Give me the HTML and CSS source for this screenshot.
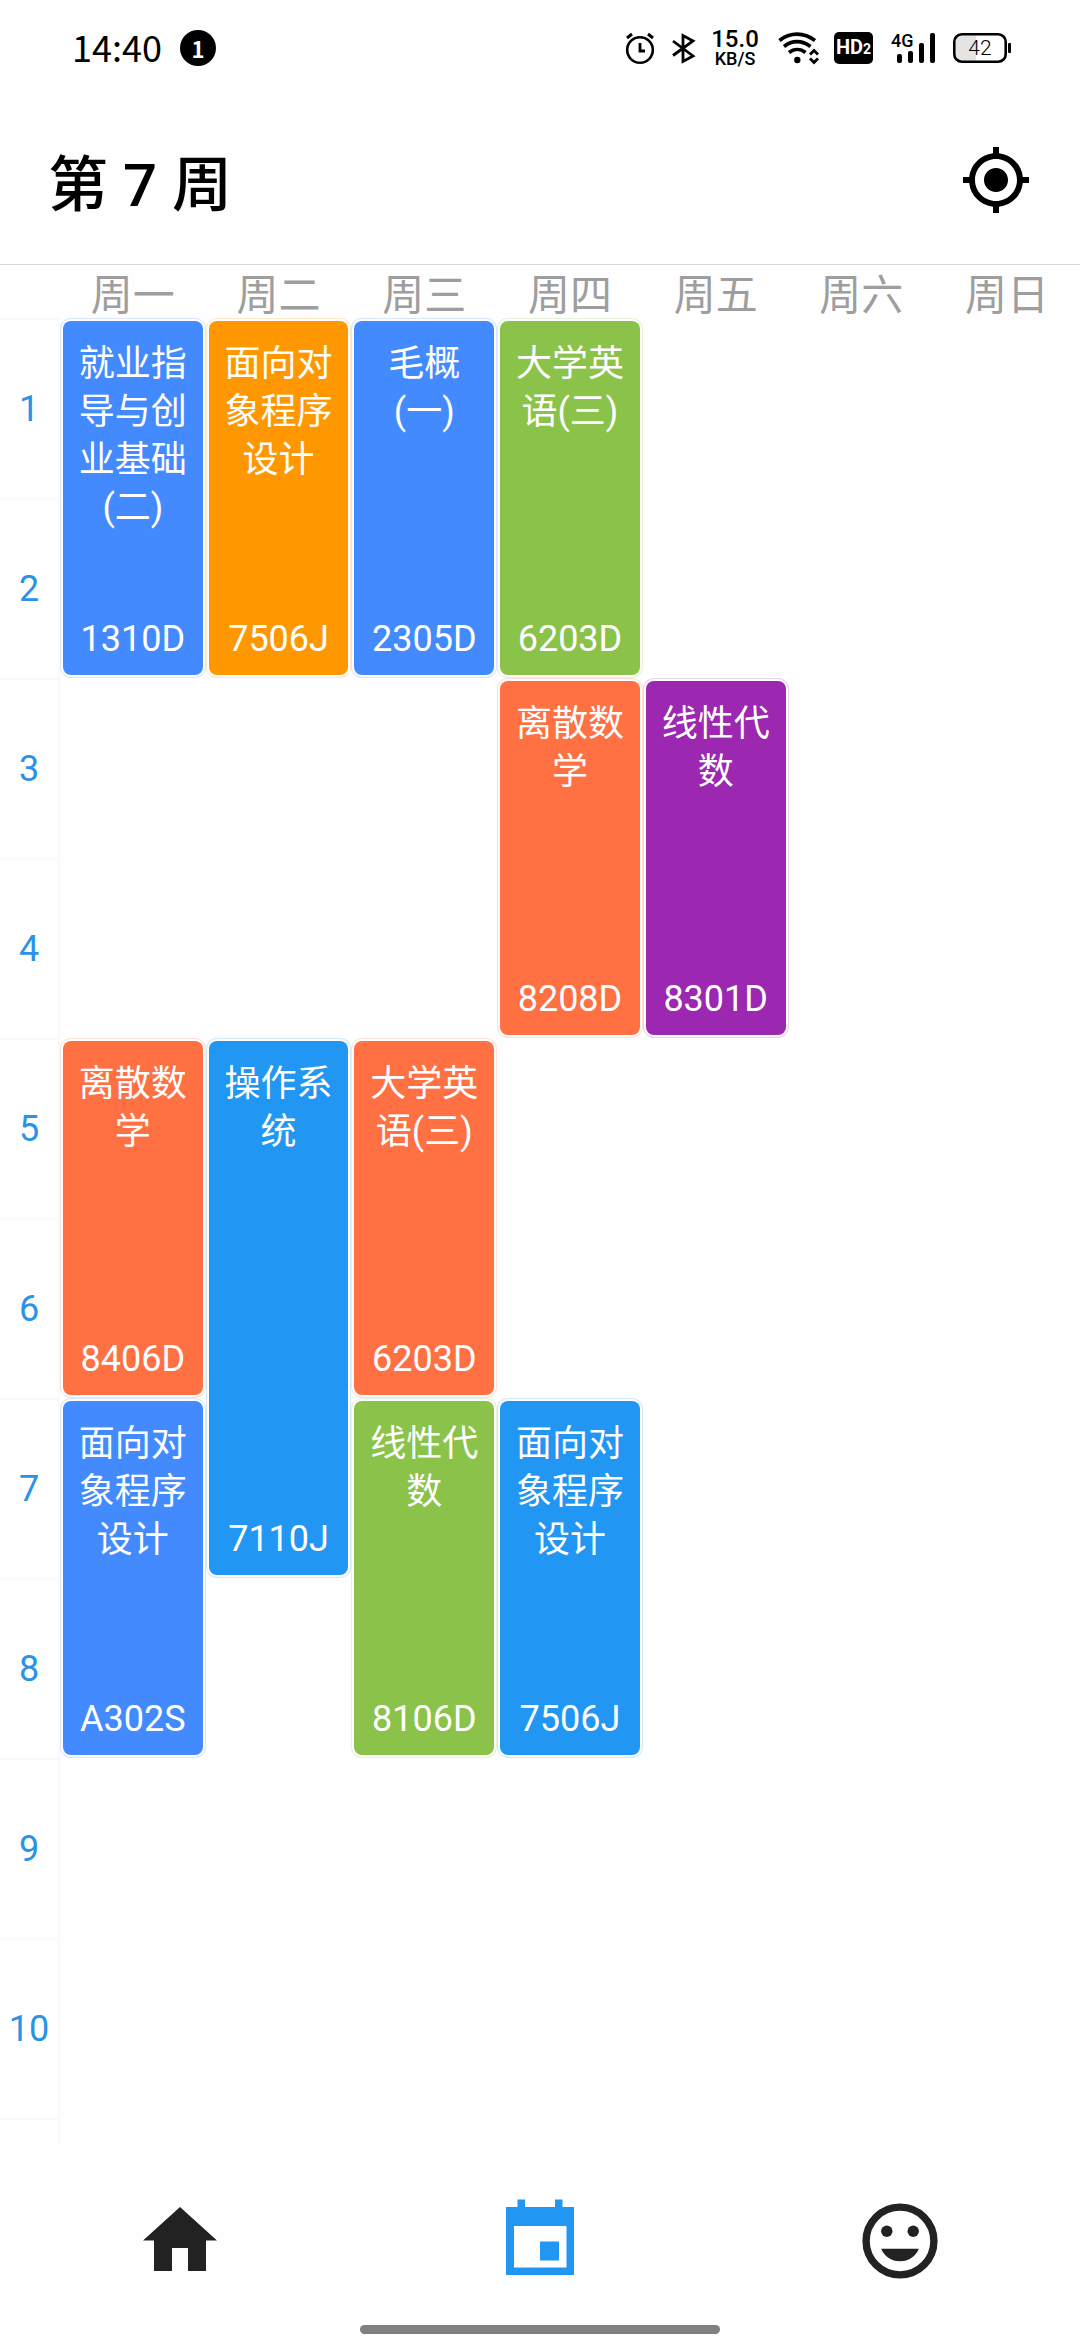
FILE: index.html
```html
<!DOCTYPE html>
<html lang="zh-CN">
<head>
<meta charset="utf-8">
<meta name="viewport" content="width=device-width, initial-scale=1">
<title>第 7 周</title>
<link rel="stylesheet" href="styles.css">
</head>
<body>
<div class="app">
  <div class="status-bar">
    <div class="status-left">
      <span class="clock">14:40</span>
      <span class="badge">1</span>
    </div>
    <div class="status-right">
      <svg width="28" height="32" viewBox="0 0 28 32" fill="none" stroke="#000">
        <circle cx="14" cy="18" r="12.8" stroke-width="2.6"/>
        <path d="M14 11v8h5" stroke-width="2.8"/>
        <path d="M1 6l5-4M27 6l-5-4" stroke-width="3"/>
      </svg>
      <svg width="22" height="32" viewBox="0 0 22 32" fill="none" stroke="#000" stroke-width="2.8">
        <path d="M1 9l20 15-10 5.500V3.500L21 9 1 23.500"/>
      </svg>
      <span class="speed"><span class="speed-value">15.0</span><span class="speed-unit">KB/S</span></span>
      <svg class="wifi" width="40" height="32" viewBox="0 0 40 32" fill="none" stroke="#000">
        <path d="M3.500 8.500C14 0 28 0 39 8.500" stroke-width="3.600"/>
        <path d="M8 14.500C16 8 26 8 34.500 14.500" stroke-width="3.600"/>
        <path d="M13 20.500C18 16.500 24.500 16.500 29.500 20.500" stroke-width="3.600"/>
        <circle cx="21.300" cy="28" r="3.200" fill="#000" stroke="none"/>
        <path d="M34 22.500l4-4 4 4M34 26.500l4 4 4-4" stroke-width="2.800"/>
      </svg>
      <span class="hd">HD<span class="hd-sim">2</span></span>
      <svg width="44" height="32" viewBox="0 0 44 32">
        <text class="network" x="0" y="15">4G</text>
        <rect x="6" y="22" width="5" height="9" rx="2"/>
        <rect x="17" y="19" width="5" height="12" rx="2"/>
        <rect x="28" y="11" width="5" height="20" rx="2"/>
        <rect x="39" y="1" width="5" height="30" rx="2"/>
      </svg>
      <svg width="58" height="32" viewBox="0 0 58 32">
        <path d="M9 3h14v26H9a6 6 0 0 1-6-6V9a6 6 0 0 1 6-6z" fill="#e4e4e4"/>
        <rect x="1.300" y="2.300" width="51.400" height="27.400" rx="7.500" fill="none" stroke="#000" stroke-width="2.600"/>
        <rect x="55" y="11" width="3" height="10" rx="1"/>
        <text class="charge" x="27" y="23" text-anchor="middle">42</text>
      </svg>
    </div>
  </div>

  <header class="title-bar">
    <h1>第 7 周</h1>
    <button class="locate" type="button" aria-label="回到本周">
      <svg width="72" height="72" viewBox="0 0 24 24">
        <path d="M12 8c-2.210 0-4 1.790-4 4s1.790 4 4 4 4-1.790 4-4-1.790-4-4-4zm8.940 3A8.994 8.994 0 0 0 13 3.060V1h-2v2.060A8.994 8.994 0 0 0 3.060 11H1v2h2.060A8.994 8.994 0 0 0 11 20.940V23h2v-2.060A8.994 8.994 0 0 0 20.940 13H23v-2h-2.060zM12 19c-3.870 0-7-3.130-7-7s3.130-7 7-7 7 3.130 7 7-3.130 7-7 7z"/>
      </svg>
    </button>
  </header>

  <main class="schedule">
    <table class="timetable">
      <colgroup><col class="period-col"><col span="7"></colgroup>
      <thead>
        <tr><td></td><th scope="col">周一</th><th scope="col">周二</th><th scope="col">周三</th><th scope="col">周四</th><th scope="col">周五</th><th scope="col">周六</th><th scope="col">周日</th></tr>
      </thead>
      <tbody>
        <tr>
          <th scope="row">1</th>
          <td rowspan="2"><div class="course blue"><span>就业指导与创业基础(二)</span><span class="room">1310D</span></div></td>
          <td rowspan="2"><div class="course amber"><span>面向对象程序设计</span><span class="room">7506J</span></div></td>
          <td rowspan="2"><div class="course blue"><span>毛概(一)</span><span class="room">2305D</span></div></td>
          <td rowspan="2"><div class="course green"><span>大学英语(三)</span><span class="room">6203D</span></div></td>
          <td></td><td></td><td></td>
        </tr>
        <tr><th scope="row">2</th><td></td><td></td><td></td></tr>
        <tr>
          <th scope="row">3</th>
          <td></td><td></td><td></td>
          <td rowspan="2"><div class="course orange"><span>离散数学</span><span class="room">8208D</span></div></td>
          <td rowspan="2"><div class="course purple"><span>线性代数</span><span class="room">8301D</span></div></td>
          <td></td><td></td>
        </tr>
        <tr><th scope="row">4</th><td></td><td></td><td></td><td></td><td></td></tr>
        <tr>
          <th scope="row">5</th>
          <td rowspan="2"><div class="course orange"><span>离散数学</span><span class="room">8406D</span></div></td>
          <td rowspan="3"><div class="course long sky"><span>操作系统</span><span class="room">7110J</span></div></td>
          <td rowspan="2"><div class="course orange"><span>大学英语(三)</span><span class="room">6203D</span></div></td>
          <td></td><td></td><td></td><td></td>
        </tr>
        <tr><th scope="row">6</th><td></td><td></td><td></td><td></td></tr>
        <tr>
          <th scope="row">7</th>
          <td rowspan="2"><div class="course blue"><span>面向对象程序设计</span><span class="room">A302S</span></div></td>
          <td rowspan="2"><div class="course green"><span>线性代数</span><span class="room">8106D</span></div></td>
          <td rowspan="2"><div class="course sky"><span>面向对象程序设计</span><span class="room">7506J</span></div></td>
          <td></td><td></td><td></td>
        </tr>
        <tr><th scope="row">8</th><td></td><td></td><td></td><td></td></tr>
        <tr><th scope="row">9</th><td></td><td></td><td></td><td></td><td></td><td></td><td></td></tr>
        <tr><th scope="row">10</th><td></td><td></td><td></td><td></td><td></td><td></td><td></td></tr>
        <tr class="tail"><th></th><td></td><td></td><td></td><td></td><td></td><td></td><td></td></tr>
      </tbody>
    </table>
  </main>

  <nav class="tabs">
    <a href="#home" aria-label="首页">
      <svg width="76" height="76" viewBox="0 0 76 76"><path d="M38 4L1 37.500h11V68h18V45h16v23h18V37.500h11z"/></svg>
    </a>
    <a class="active" href="#schedule" aria-label="课表" aria-current="page">
      <svg width="76" height="76" viewBox="0 0 76 76"><path fill-rule="evenodd" d="M15.500-3.500H23V4h30v-7.500h7.500V4H72v68H4V4h11.500zM12 23v41.500h52.500V23zM38 38.500h19v19H38z"/></svg>
    </a>
    <a href="#me" aria-label="我的">
      <svg width="76" height="76" viewBox="0 0 76 76">
        <circle cx="38" cy="38" r="33.900" fill="none" stroke="currentColor" stroke-width="7.400"/>
        <circle cx="24.800" cy="28.300" r="5.700"/><circle cx="51.200" cy="28.300" r="5.700"/>
        <path d="M19.200 45.700h37.600C54 53 46.800 58.300 38 58.300S22 53 19.200 45.700z"/>
      </svg>
    </a>
  </nav>
  <div class="home-indicator"></div>
</div>
</body>
</html>
```
FILE: styles.css
```css
* {
  box-sizing: border-box;
}

body {
  margin: 0;
  background: #fefefe;
  color: #000;
  font-family: Roboto, "Noto Sans CJK SC", sans-serif;
}

svg {
  display: block;
  flex: none;
  overflow: visible;
}

.app {
  display: flex;
  flex-direction: column;
  min-height: 100vh;
}

/* Status bar */
.status-bar {
  display: flex;
  align-items: center;
  justify-content: space-between;
  height: 96px;
  padding: 0 69px 0 72px;
}

.status-left,
.status-right {
  display: flex;
  align-items: center;
  gap: 18px;
}

.clock {
  padding-bottom: 4px;
  font: 36px/48px "Noto Sans CJK SC", sans-serif;
}

.badge {
  width: 36px;
  border-radius: 50%;
  background: #000;
  color: #fff;
  font: bold 22px/36px "Noto Sans CJK SC", sans-serif;
  text-align: center;
}

.speed {
  display: flex;
  flex-direction: column;
  align-items: center;
  width: 46px;
  font-weight: 500;
}

.speed-value {
  font-size: 24px;
  line-height: 22px;
}

.speed-unit {
  font-size: 18px;
  line-height: 18px;
}

.hd {
  width: 39px;
  border-radius: 5px;
  background: #000;
  color: #fff;
  font-size: 20px;
  font-weight: 700;
  line-height: 30px;
  text-align: center;
}

.hd-sim {
  font-size: 14px;
}

.network {
  font-size: 18px;
  font-weight: 500;
}

.charge {
  font-size: 21px;
  font-weight: 300;
}

/* Title */
.title-bar {
  display: flex;
  align-items: center;
  justify-content: space-between;
  height: 169px;
  padding: 0 48px;
  border-bottom: 1px solid #d8d8d8;
}

h1 {
  margin: 0;
  padding-top: 12px;
  font-size: 60px;
  font-weight: 500;
  line-height: 72px;
}

.locate {
  padding: 0;
  border: 0;
  background: none;
}

/* Timetable */
.schedule {
  flex: 1;
}

.timetable {
  width: 100%;
  table-layout: fixed;
  border-spacing: 0;
}

.period-col {
  width: 60px;
}

th,
td {
  height: 180px;
  padding: 0;
  font-weight: 400;
}

thead th,
thead td {
  height: 53px;
  padding-top: 8px;
  color: #9e9e9e;
  font-size: 42px;
  line-height: 45px;
}

tbody th {
  border-top: 2px solid #f9f9f9;
  border-right: 2px solid #f9f9f9;
  color: #2b93e6;
  font-size: 36px;
  line-height: 48px;
}

tbody td {
  padding: 3px;
  vertical-align: top;
}

.tail th,
.tail td {
  height: 24px;
}

.course {
  --tone: #448aff;
  display: flex;
  flex-direction: column;
  justify-content: space-between;
  height: 354px;
  padding: 19px 12px 12px;
  border-radius: 8px;
  background: var(--tone);
  box-shadow: 0 0 0 2px #fefefe, 0 0 0 3px color-mix(in srgb, var(--tone) 20%, #fefefe);
  color: #fff;
  font-size: 36px;
  line-height: 48px;
  text-align: center;
}

.long {
  height: 534px;
}

.amber {
  --tone: #ff9800;
}

.green {
  --tone: #8bc34a;
}

.orange {
  --tone: #ff7043;
}

.purple {
  --tone: #9c27b0;
}

.sky {
  --tone: #2196f3;
}

/* Bottom navigation */
.tabs {
  display: flex;
  height: 183px;
}

.tabs a {
  display: flex;
  flex: 1;
  align-items: center;
  justify-content: center;
  padding-top: 15px;
  color: #222;
  fill: currentColor;
}

.tabs .active {
  color: #2196f3;
}

.home-indicator {
  width: 33.333%;
  height: 9px;
  margin: 0 auto 6px;
  border-radius: 5px;
  background: #808080;
}
```
